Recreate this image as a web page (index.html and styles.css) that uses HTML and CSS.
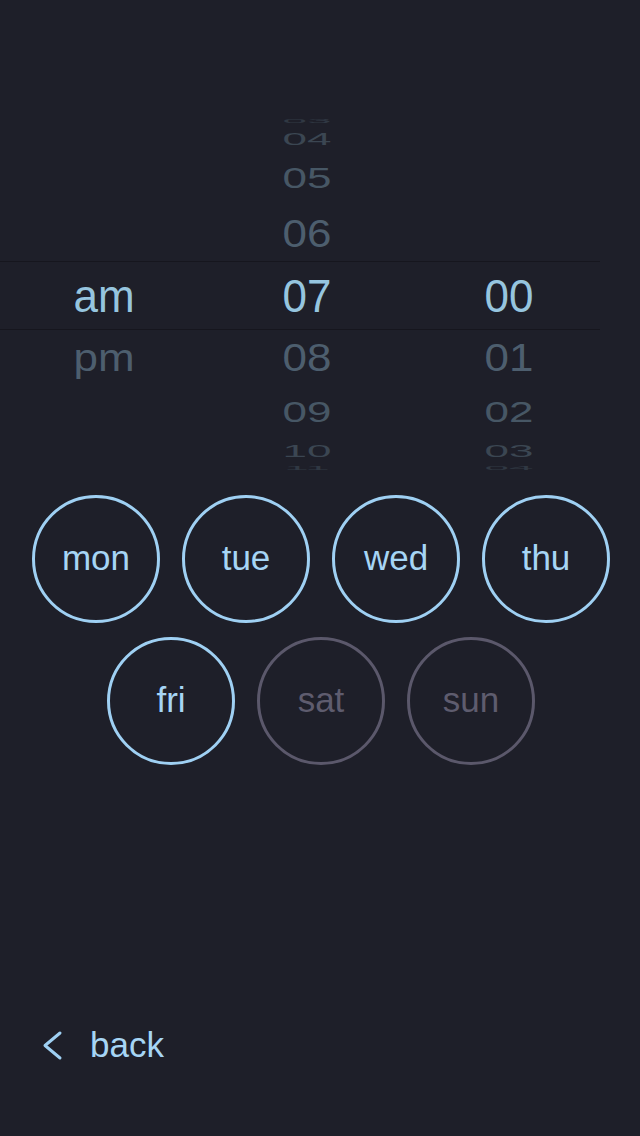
FILE: index.html
```html
<!DOCTYPE html>
<html>
<head>
    <meta charset="UTF-8">
    <title>Alarm</title>
    <link rel="stylesheet" href="styles.css">
</head>
<body>
    <!-- time picker wheel: rows fan out from the selected band -->
    <div class="picker">
        <div class="row r3"><span></span><span><i>03</i></span><span></span></div>
        <div class="row r4"><span></span><span><i>04</i></span><span></span></div>
        <div class="row r5"><span></span><span><i>05</i></span><span></span></div>
        <div class="row r6"><span></span><span><i>06</i></span><span></span></div>
        <div class="row selected"><span><i>am</i></span><span><i>07</i></span><span><i>00</i></span></div>
        <div class="row r6 r8"><span><i>pm</i></span><span><i>08</i></span><span><i>01</i></span></div>
        <div class="row r5 r9"><span></span><span><i>09</i></span><span><i>02</i></span></div>
        <div class="row r4 r10"><span></span><span><i>10</i></span><span><i>03</i></span></div>
        <div class="row r3 r11"><span></span><span><i>11</i></span><span><i>04</i></span></div>
    </div>

    <div class="days">
        <div class="day on">mon</div>
        <div class="day on">tue</div>
        <div class="day on">wed</div>
        <div class="day on">thu</div>
        <div class="day on">fri</div>
        <div class="day">sat</div>
        <div class="day">sun</div>
    </div>

    <div class="back">
        <svg width="24" height="32" viewBox="0 0 24 32">
            <polyline points="20,4 5,16.5 20,29" fill="none" stroke="#9fd0f3" stroke-width="3" stroke-linecap="round" stroke-linejoin="round"/>
        </svg>
        <span>back</span>
    </div>
</body>
</html>
```

FILE: styles.css
```css
body {
    background-color: #1e1f29;
    margin: 0;
    min-height: 1136px;
    display: flex;
    flex-direction: column;
    font-family: "Liberation Sans", Arial, sans-serif;
}
.picker {
    width: 600px;
    margin-top: 115px;
    overflow: hidden;
}
.row {
    display: grid;
    grid-template-columns: 208px 198px 206px;
    font-size: 44px;
    color: #4d5e6e;
    overflow: hidden;
}
.row span {
    text-align: center;
}
.row i {
    font-style: normal;
    display: inline-block;
}
.r3 { height: 12px; line-height: 12px; color: #303843; }
.r3 i { transform: scaleY(0.14); }
.r4 { height: 24px; line-height: 24px; color: #3b4652; }
.r4 i { transform: scaleY(0.38); }
.r5 { height: 54px; line-height: 54px; color: #475765; }
.r5 i { transform: scaleY(0.66); }
.r6 { height: 56px; line-height: 56px; color: #4d5e6e; }
.r6 i { transform: scaleY(0.9); }
.r8 { line-height: 56px; }
.r9 { height: 52px; line-height: 52px; }
.r10 { height: 26px; line-height: 26px; }
.r11 { height: 8px; line-height: 8px; }
.selected {
    box-sizing: border-box;
    height: 69px;
    line-height: 67px;
    color: #96c5df;
    border-top: 1px solid #16161e;
    border-bottom: 1px solid #16161e;
}
.selected i {
    transform: scaleY(1.05);
}
.days {
    display: flex;
    flex-wrap: wrap;
    justify-content: center;
    gap: 14px 22px;
    width: 584px;
    margin: 23px auto 0;
    padding-left: 2px;
}
.day {
    box-sizing: border-box;
    width: 128px;
    height: 128px;
    border-radius: 50%;
    border: 3px solid #5b586b;
    color: #5e5c6e;
    font-size: 35px;
    display: flex;
    align-items: center;
    justify-content: center;
    padding-bottom: 2px;
}
.day.on {
    border-color: #9fd0f3;
    color: #a6d5f5;
}
.back {
    margin-top: auto;
    display: flex;
    align-items: center;
    gap: 26px;
    padding: 0 0 71px 40px;
    color: #a6d5f5;
    font-size: 35px;
    line-height: 40px;
}
```
